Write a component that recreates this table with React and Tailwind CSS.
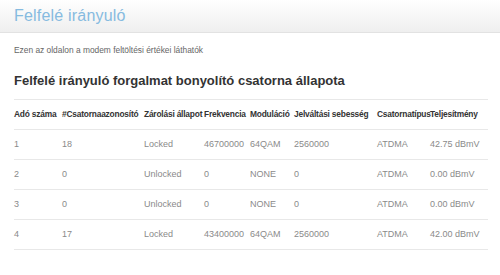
const columns = [
  { label: "Adó száma", w: "w-[48px]" },
  { label: "#Csatornaazonosító", w: "w-[82px]" },
  { label: "Zárolási állapot", w: "w-[60px]" },
  { label: "Frekvencia", w: "w-[46px]" },
  { label: "Moduláció", w: "w-[44px]" },
  { label: "Jelváltási sebesség", w: "w-[83px]" },
  { label: "Csatornatípus", w: "w-[53px]" },
  { label: "Teljesítmény", w: "w-[58px]" },
];

const rows = [
  ["1", "18", "Locked", "46700000", "64QAM", "2560000", "ATDMA", "42.75 dBmV"],
  ["2", "0", "Unlocked", "0", "NONE", "0", "ATDMA", "0.00 dBmV"],
  ["3", "0", "Unlocked", "0", "NONE", "0", "ATDMA", "0.00 dBmV"],
  ["4", "17", "Locked", "43400000", "64QAM", "2560000", "ATDMA", "42.00 dBmV"],
];

export default function App() {
  return (
    <div className="w-[500px] h-[275px] bg-white overflow-hidden font-['Liberation_Sans',Arial,sans-serif]">
      {/* Fejléc */}
      <header className="h-[33px] bg-gradient-to-b from-white to-[#efefef] border-b border-[#e2e2e2] px-[14px] flex items-center">
        <h1 className="text-[16px] text-[#86bbe0] tracking-[0.2px]">Felfelé irányuló</h1>
      </header>

      <main className="px-[14px]">
        <p className="mt-[12px] text-[8.4px] text-[#666] leading-[10px]">
          Ezen az oldalon a modem feltöltési értékei láthatók
        </p>

        <h2 className="mt-[18px] text-[13px] font-bold text-[#333] leading-[16px]">
          Felfelé irányuló forgalmat bonyolító csatorna állapota
        </h2>

        <table className="mt-[10px] w-[474px] border-collapse table-fixed">
          <thead>
            <tr className="border-t border-b border-[#e8e8e8] h-[30px]">
              {columns.map((c) => (
                <th
                  key={c.label}
                  className={`${c.w} text-left text-[8.4px] font-bold text-[#333] whitespace-nowrap tracking-[-0.2px] p-0`}
                >
                  {c.label}
                </th>
              ))}
            </tr>
          </thead>
          <tbody>
            {rows.map((r, i) => (
              <tr key={i} className="border-b border-[#e8e8e8] h-[30px]">
                {r.map((v, j) => (
                  <td key={j} className="text-[9px] text-[#8a8a8a] whitespace-nowrap p-0">
                    {v}
                  </td>
                ))}
              </tr>
            ))}
          </tbody>
        </table>
      </main>
    </div>
  );
}
